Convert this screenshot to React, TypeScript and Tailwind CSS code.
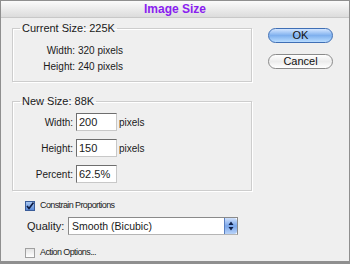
import React from "react";

const font = { fontFamily: '"Liberation Sans", Arial, sans-serif' };

function Checkbox({ checked }: { checked?: boolean }) {
  return (
    <span
      className={
        "flex h-[10px] w-[10px] items-center justify-center border " +
        (checked
          ? "border-[#3a5d9a] bg-gradient-to-b from-[#a9c8f2] to-[#5a88d6]"
          : "border-[#a0a0a0] bg-gradient-to-b from-[#e4e4e4] to-[#ffffff]")
      }
    >
      {checked && (
        <svg width="8" height="8" viewBox="0 0 8 8">
          <path d="M1 4 L3 6.5 L7.5 0.5" stroke="#0c1a40" strokeWidth="1.6" fill="none" />
        </svg>
      )}
    </span>
  );
}

function Field({ label, value }: { label: string; value: string }) {
  return (
    <>
      <span className="pr-[3px] text-right text-[10px]">{label}</span>
      <span className="flex h-[18px] w-[41px] items-center border border-[#6e6e6e] border-r-[#c8c8c8] border-b-[#c8c8c8] bg-white pl-[2px] text-[11px]">
        {value}
      </span>
    </>
  );
}

export default function App() {
  return (
    <div
      className="flex h-[264px] w-[350px] flex-col border border-[#8f8f8f] border-b-[3px] bg-[#efefef] text-[11px] leading-[13px] text-[#1a1a1a]"
      style={font}
    >
      <div className="flex h-[17px] shrink-0 items-center justify-center border-b border-[#c8c8c8] bg-gradient-to-b from-[#fbfbfb] to-[#dcdcdc]">
        <span className="text-[12px] font-bold text-[#8a20f0]">Image Size</span>
      </div>

      <div className="flex">
        <div className="ml-[11px] flex w-[240px] flex-col">
          <fieldset className="mt-[4px] border border-[#cdcdcd] pb-[8px] shadow-[inset_1px_1px_0_#fff,1px_1px_0_#fff]">
            <legend className="ml-[7px] px-[2px]">Current Size: 225K</legend>
            <div className="mt-[9px] grid grid-cols-[62px_auto] gap-y-[3px] text-[10px]">
              <span className="text-right">Width:</span>
              <span className="pl-[3px]">320 pixels</span>
              <span className="text-right">Height:</span>
              <span className="pl-[3px]">240 pixels</span>
            </div>
          </fieldset>

          <fieldset className="mt-[13px] border border-[#cdcdcd] pb-[7px] shadow-[inset_1px_1px_0_#fff,1px_1px_0_#fff]">
            <legend className="ml-[7px] px-[2px]">New Size: 88K</legend>
            <div className="mt-[5px] grid grid-cols-[63px_41px_auto] items-center gap-y-[8px]">
              <Field label="Width:" value="200" />
              <span className="pl-[2px] text-[10px]">pixels</span>
              <Field label="Height:" value="150" />
              <span className="pl-[2px] text-[10px]">pixels</span>
              <Field label="Percent:" value="62.5%" />
              <span />
            </div>
          </fieldset>

          <div className="mt-[8px] flex items-center gap-[5px] pl-[13px] text-[9px] tracking-[-0.6px] text-[#222]">
            <Checkbox checked />
            <span>Constrain Proportions</span>
          </div>

          <div className="mt-[5px] flex items-center pl-[15px]">
            <span className="w-[41px]">Quality:</span>
            <div className="flex h-[18px] w-[170px] border border-[#8a8a8a] border-b-[#b5b5b5] bg-white">
              <span className="flex flex-1 items-center pl-[3px] text-[10.5px]">Smooth (Bicubic)</span>
              <span className="flex w-[13px] items-center justify-center rounded-r-[3px] border-l border-[#5a7fc0] bg-gradient-to-b from-[#cfe0fb] via-[#7aa6ea] to-[#b9d3f8]">
                <svg width="6" height="10" viewBox="0 0 6 10">
                  <path d="M3 0.5 L5.5 4 L0.5 4 Z M3 9.5 L5.5 6 L0.5 6 Z" fill="#10204a" />
                </svg>
              </span>
            </div>
          </div>

          <div className="mt-[11px] flex items-center gap-[5px] pl-[13px] text-[9px] tracking-[-0.6px] text-[#222]">
            <Checkbox />
            <span>Action Options...</span>
          </div>
        </div>

        <div className="ml-[16px] mt-[10px] flex flex-col gap-[11px]">
          <button className="h-[15px] w-[65px] rounded-full border border-[#3f6fb5] bg-gradient-to-b from-[#d4e6ff] via-[#7fb0ee] to-[#b8dcff] text-[11px] leading-[13px] text-[#111]">
            OK
          </button>
          <button className="h-[15px] w-[65px] rounded-full border border-[#8a8a8a] bg-gradient-to-b from-[#ffffff] via-[#ececec] to-[#ffffff] text-[11px] leading-[13px] text-[#111]">
            Cancel
          </button>
        </div>
      </div>
    </div>
  );
}
